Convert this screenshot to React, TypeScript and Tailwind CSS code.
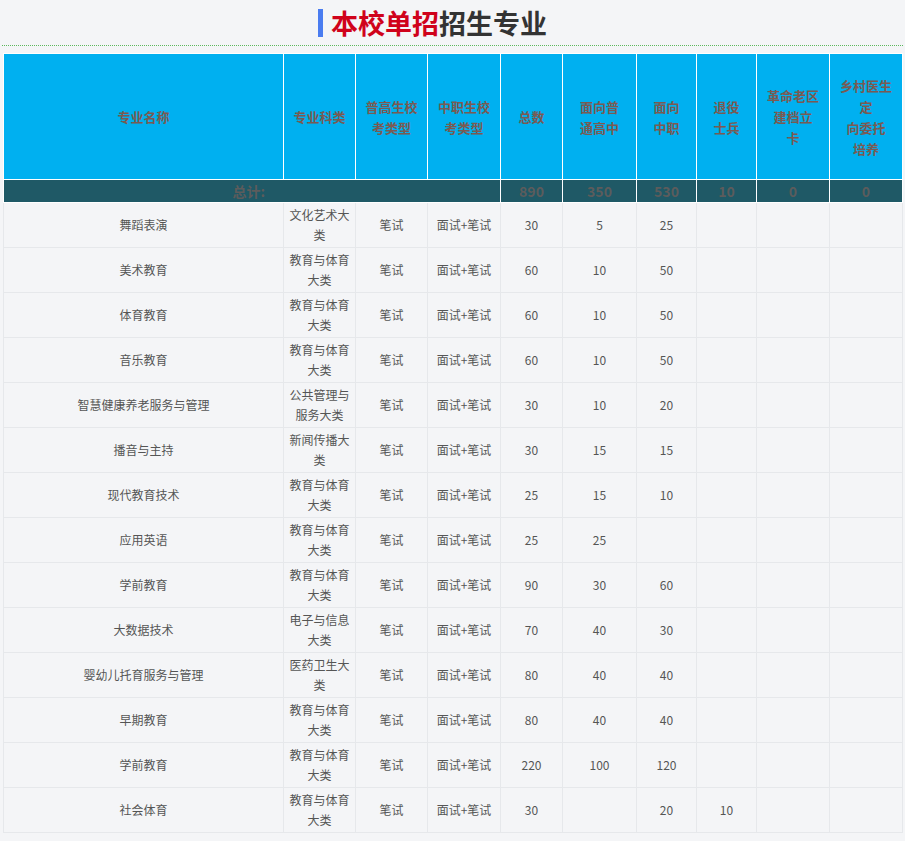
const rows: string[][] = [
  ["舞蹈表演", "文化艺术大类", "30", "5", "25", ""],
  ["美术教育", "教育与体育大类", "60", "10", "50", ""],
  ["体育教育", "教育与体育大类", "60", "10", "50", ""],
  ["音乐教育", "教育与体育大类", "60", "10", "50", ""],
  ["智慧健康养老服务与管理", "公共管理与服务大类", "30", "10", "20", ""],
  ["播音与主持", "新闻传播大类", "30", "15", "15", ""],
  ["现代教育技术", "教育与体育大类", "25", "15", "10", ""],
  ["应用英语", "教育与体育大类", "25", "25", "", ""],
  ["学前教育", "教育与体育大类", "90", "30", "60", ""],
  ["大数据技术", "电子与信息大类", "70", "40", "30", ""],
  ["婴幼儿托育服务与管理", "医药卫生大类", "80", "40", "40", ""],
  ["早期教育", "教育与体育大类", "80", "40", "40", ""],
  ["学前教育", "教育与体育大类", "220", "100", "120", ""],
  ["社会体育", "教育与体育大类", "30", "", "20", "10"],
];

const widths = [280, 72, 72, 73, 62, 74, 60, 60, 73, 73];

const heads: string[][] = [
  ["专业名称"],
  ["专业科类"],
  ["普高生校", "考类型"],
  ["中职生校", "考类型"],
  ["总数"],
  ["面向普", "通高中"],
  ["面向", "中职"],
  ["退役", "士兵"],
  ["革命老区", "建档立", "卡"],
  ["乡村医生", "定", "向委托", "培养"],
];

export default function App() {
  const font = { fontFamily: '"Noto Sans CJK SC", "Noto Sans", sans-serif' };
  return (
    <div className="w-[905px] h-[841px] bg-[#f4f5f7] overflow-hidden" style={font}>
      <div className="h-[46px] flex items-center justify-center border-b border-dotted border-[#5cb85c] mx-[2px]">
        <div className="w-[5px] h-[28px] bg-[#4a7cf0] mr-[8px]" />
        <span className="text-[27px] font-bold text-[#d0021b] leading-none">本校单招</span>
        <span className="text-[27px] font-bold text-[#333] leading-none">招生专业</span>
        <div className="w-[40px]" />
      </div>
      <table className="ml-[3px] mt-[7px] border-collapse table-fixed" style={{ width: 899 }}>
        <colgroup>
          {widths.map((w, i) => (
            <col key={i} style={{ width: w }} />
          ))}
        </colgroup>
        <thead>
          <tr className="h-[126px] bg-[#00b0f0] text-[13px] font-bold text-[#7a5a52] leading-[21px]">
            {heads.map((t, i) => (
              <th key={i} className="border border-white px-[2px] font-bold">
                {t.map((l, j) => (
                  <div key={j}>{l}</div>
                ))}
              </th>
            ))}
          </tr>
          <tr className="h-[23px] bg-[#1f5966] text-[14px] font-bold text-[#5c5c5c]">
            <th colSpan={4} className="border border-white text-right pr-[235px]">总计:</th>
            {["890", "350", "530", "10", "0", "0"].map((t, i) => (
              <th key={i} className="border border-white">{t}</th>
            ))}
          </tr>
        </thead>
        <tbody className="text-[12px] text-[#555]">
          {rows.map((r, i) => (
            <tr key={i} className="h-[45px]">
              <td className="border border-[#e6e8eb] text-center">{r[0]}</td>
              <td className="border border-[#e6e8eb] text-center px-[4px] leading-[20px]">{r[1]}</td>
              <td className="border border-[#e6e8eb] text-center">笔试</td>
              <td className="border border-[#e6e8eb] text-center">面试+笔试</td>
              <td className="border border-[#e6e8eb] text-center">{r[2]}</td>
              <td className="border border-[#e6e8eb] text-center">{r[3]}</td>
              <td className="border border-[#e6e8eb] text-center">{r[4]}</td>
              <td className="border border-[#e6e8eb] text-center">{r[5]}</td>
              <td className="border border-[#e6e8eb]"></td>
              <td className="border border-[#e6e8eb]"></td>
            </tr>
          ))}
        </tbody>
      </table>
    </div>
  );
}
